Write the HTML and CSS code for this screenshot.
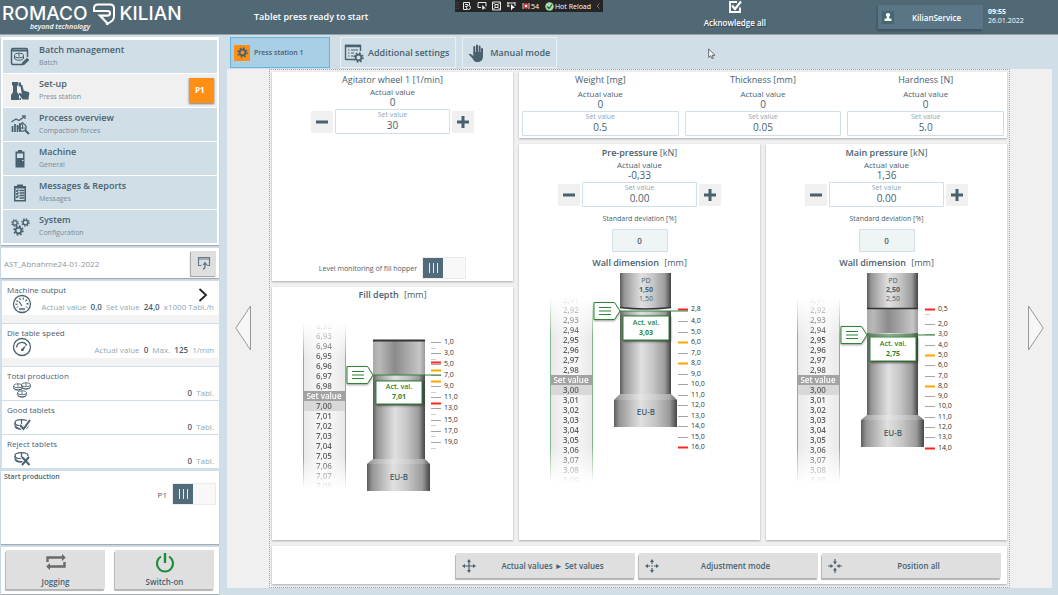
FILE: index.html
```
<!DOCTYPE html>
<html lang="en">
<head>
    <meta charset="UTF-8" />
    <meta name="viewport" content="width=device-width, initial-scale=1.0"/>
    <title>Romaco Kilian - Press station</title>
    <link rel="stylesheet" href="styles.css">
</head>
<body>
    <!-- shared icons and gradients -->
    <svg class="defs" width="0" height="0" aria-hidden="true">
        <defs>
            <linearGradient id="metal">
                <stop offset="0" stop-color="#5c5c5c"/>
                <stop offset="0.08" stop-color="#949494"/>
                <stop offset="0.25" stop-color="#bdbdbd"/>
                <stop offset="0.42" stop-color="#e0e0e0"/>
                <stop offset="0.65" stop-color="#c6c6c6"/>
                <stop offset="0.88" stop-color="#9b9b9b"/>
                <stop offset="1" stop-color="#454545"/>
            </linearGradient>
            <linearGradient id="die">
                <stop offset="0" stop-color="#a9a9a9"/>
                <stop offset="0.12" stop-color="#b9b9b9"/>
                <stop offset="0.42" stop-color="#8b8b8b"/>
                <stop offset="0.9" stop-color="#c6c6c6"/>
                <stop offset="1" stop-color="#9a9a9a"/>
            </linearGradient>
            <symbol id="gear" viewBox="0 0 20 20">
                <circle cx="10" cy="10" r="5.2" fill="none" stroke="currentColor" stroke-width="3"/>
                <circle cx="10" cy="10" r="8" fill="none" stroke="currentColor" stroke-width="3" stroke-dasharray="3.2 3.08"/>
            </symbol>
            <symbol id="minus" viewBox="0 0 12 12"><path d="M0 4.5h12v3H0z" fill="currentColor"/></symbol>
            <symbol id="plus" viewBox="0 0 12 12"><path d="M4.5 0h3v4.5H12v3H7.5V12h-3V7.5H0v-3h4.5z" fill="currentColor"/></symbol>
            <symbol id="tablet" viewBox="0 0 12 9">
                <ellipse cx="6" cy="3" rx="5.3" ry="2.4" fill="#fff" stroke="currentColor"/>
                <path d="M.7 3v2.6c0 3.6 10.6 3.6 10.6 0V3M6 .8v4" fill="none" stroke="currentColor"/>
                <path d="M1.5 5.5C3 8 9 8 10.500 5.500V7C8 9 4 9 1.500 7z" fill="currentColor"/>
            </symbol>
        </defs>
    </svg>

    <header class="header">
        <div class="logo">
            <div class="logo-name">
                <span>ROMACO</span>
                <svg class="logo-mark" viewBox="0 0 24 23">
                    <path d="M2 7.500V5.500Q2 1.500 6 1.500H18Q22 1.500 22 5.500V13Q22 17 18.500 19L14 21.500" fill="none" stroke="#fff" stroke-width="2"/>
                    <path d="M1 8H15.500Q18 8 18 10.300T15.500 12.600H8L16.500 21.500" fill="none" stroke="#fff" stroke-width="2.200"/>
                </svg>
                <span>KILIAN</span>
            </div>
            <div class="slogan">beyond technology</div>
        </div>
        <div class="status">Tablet press ready to start</div>
        <button class="acknowledge" type="button">
            <svg width="14" height="14" viewBox="0 0 14 14" fill="none" stroke="#fff">
                <path d="M9 2H2v10h10V7.500" stroke-width="1.800"/>
                <path d="M4 5.500L7 9L13 1.500" stroke-width="2.200"/>
            </svg>
            Acknowledge all
        </button>
        <button class="user" type="button">
            <span class="user-icon">
                <svg width="8" height="8" viewBox="0 0 8 8"><path d="M4 0a2 2 0 0 1 1.300 3.600L5 5l2.500 1v2h-7V6L3 5l-.3-1.400A2 2 0 0 1 4 0z" fill="#fff"/></svg>
            </span>
            <span class="user-name">KilianService</span>
        </button>
        <div class="clock"><b>09:55</b><span>26.01.2022</span></div>

        <div class="devbar">
            <svg width="66" height="10" viewBox="0 0 66 10" fill="none" stroke="#e8e8e8">
                <path d="M1 1v8M3 1v8" stroke="#555" stroke-dasharray="1 1"/>
                <path d="M12 8.500H8.500V1.500h6V4M10 3.500h3M10 5.500h2"/><circle cx="13.500" cy="6.500" r="2"/>
                <path d="M26 6.500h-3v-5h8v4"/><path d="M27 4l4 3.500h-2L27.500 9z" fill="#fff" stroke="none"/>
                <path d="M37.500 1h8v8h-8z"/><path d="M40 3.500h3v3h-3zM38 1.500l2 2M45 1.500l-2 2M38 8.500l2-2M45 8.500l-2-2"/>
                <path d="M52 2h8M52 5h3M53 1v5M60 1v4"/><path d="M56 3l4 4h-2l-2 2.500z" fill="#fff" stroke="none"/>
            </svg>
            <svg width="8" height="8" viewBox="0 0 8 8"><path d="M1 1v6M7 1v6" stroke="#ddd"/><circle cx="4" cy="4" r="2.700" fill="#e0433a"/><path d="M3 3l2 2M5 3L3 5" stroke="#fff"/></svg>
            <span>54</span>
            <svg class="hot" width="9" height="9" viewBox="0 0 9 9"><circle cx="4.500" cy="4.500" r="4.200" fill="#a9dcae"/><path d="M2.300 4.500L4 6.500L7 2.500" stroke="#1c5d25" stroke-width="1.200" fill="none"/></svg>
            <span>Hot Reload</span>
            <svg class="collapse" width="4" height="6" viewBox="0 0 4 6"><path d="M3.500.5L1 3l2.500 2.500" stroke="#777" fill="none"/></svg>
        </div>
    </header>

    <div class="page">
        <aside class="sidebar">
            <nav class="panel menu">
                <a href="#" class="menu-item">
                    <svg viewBox="0 0 20 20" fill="none" stroke="currentColor">
                        <path d="M12 17.500H3Q1.500 17.500 1.500 16V3Q1.500 1.500 3 1.500H16Q17.500 1.500 17.500 3V10" stroke-width="1.500"/><path d="M1.500 3.500h16" stroke-width="2"/>
                        <ellipse cx="9" cy="8.500" rx="4.500" ry="2.300"/><path d="M4.500 8.500V11c0 3 9 3 9 0V8.500M9 6.500v3"/>
                        <path d="M11.500 18.500l.7-3 4.800-4.800 2.300 2.300-4.800 4.800z" fill="currentColor" stroke="none"/>
                    </svg>
                    <span class="menu-text"><b>Batch management</b><small>Batch</small></span>
                </a>
                <a href="#" class="menu-item active">
                    <svg viewBox="0 0 20 20" fill="currentColor">
                        <path d="M2 1h6v3l-1 1v6l2 3v5H1v-5l2-3V5L2 4zM8.500 1.500h2.500V4h1.500v1.500h-4z"/>
                        <path d="M10.500 5l1.800-.3 1.600 5 4 1q1.600.5 1.500 2l-.7 3.300v2.500h-6l-4.200-5.500 1.300-1.200 2 1.200z"/>
                        <path d="M9.500 17H11v2H9.500z"/>
                    </svg>
                    <span class="menu-text"><b>Set-up</b><small>Press station</small></span>
                    <span class="menu-badge">P1</span>
                </a>
                <a href="#" class="menu-item">
                    <svg viewBox="0 0 20 20" fill="none" stroke="currentColor">
                        <path d="M1.500 7L6 4l3 1.500L14 2" stroke-width="1.300"/><path d="M12 1h3v3" stroke-width="1.300"/>
                        <path d="M2.500 17V11M5 17V9M7.500 17v-7M10 17V8M12.500 9V7" stroke-width="1.700"/>
                        <circle cx="12.500" cy="12.500" r="3.600" stroke-width="1.400"/><path d="M15 15l4 4" stroke-width="2"/><path d="M11 14v-2M12.500 14v-4M14 14v-2"/>
                    </svg>
                    <span class="menu-text"><b>Process overview</b><small>Compaction forces</small></span>
                </a>
                <a href="#" class="menu-item">
                    <svg viewBox="0 0 20 20">
                        <path d="M8 1h4v1.500H8zM5.500 2.500h9V18.500h-9z" fill="currentColor"/><path d="M7 4.500h6V9H7z" fill="#d0dee7"/><path d="M12 11.500h1.500" stroke="#d0dee7"/>
                    </svg>
                    <span class="menu-text"><b>Machine</b><small>General</small></span>
                </a>
                <a href="#" class="menu-item">
                    <svg viewBox="0 0 20 20">
                        <path d="M4 3h3V1.500h6V3h3v15.500H4z" fill="currentColor"/><path d="M5.500 5.500h9V17h-9z" fill="#d0dee7"/>
                        <path d="M6 7.500l1 1 1.500-2M6 10.500l1 1 1.500-2M6 13.500l1 1 1.500-2M9.500 7.500h5M9.500 10h5M9.500 12.500h5M9.500 15h5" stroke="currentColor" stroke-width="1.300" fill="none"/>
                    </svg>
                    <span class="menu-text"><b>Messages &amp; Reports</b><small>Messages</small></span>
                </a>
                <a href="#" class="menu-item">
                    <svg viewBox="0 0 20 20"><use href="#gear" x="1" y="2" width="8" height="8"/><use href="#gear" x="11" y="1" width="9" height="9"/><use href="#gear" x="3" y="8" width="11" height="11"/></svg>
                    <span class="menu-text"><b>System</b><small>Configuration</small></span>
                </a>
            </nav>

            <div class="panel project">
                <span>AST_Abnahme24-01-2022</span>
                <button type="button" class="project-open" aria-label="Open product">
                    <svg width="14" height="14" viewBox="0 0 14 14" fill="none" stroke="#5f7a8b"><path d="M4.500 9.500h-3v-8h11v8H10" stroke-width="1.200"/><path d="M1 3h12"/><path d="M6 13Q8.500 12.500 8 8" stroke-width="1.400"/><path d="M5.500 9L8 5.500l2.500 3.500z" fill="#5f7a8b" stroke="none"/></svg>
                </button>
            </div>

            <section class="stats">
                <div class="stat stat-tall">
                    <h3>Machine output</h3>
                    <div class="stat-row">
                        <svg width="20" height="20" viewBox="0 0 20 20" fill="none" stroke="currentColor"><circle cx="10" cy="10" r="8.500" stroke-width="1.300"/><circle cx="10" cy="10" r="5.500" stroke-width="2" stroke-dasharray="1.200 2.100" stroke-dashoffset="17"/><path d="M5 13.500h10v3H5z" fill="#fff" stroke="none"/><path d="M7 15h6" stroke-width="1.500"/><path d="M10 12L7 7.500" stroke-width="1.200"/></svg>
                        <p>Actual value <b>0,0</b> Set value <b>24,0</b> x1000 Tabl./h</p>
                    </div>
                    <svg class="stat-more" width="10" height="14" viewBox="0 0 10 14"><path d="M1.500 1L8 7L1.500 13" fill="none" stroke="#222" stroke-width="1.800"/></svg>
                </div>
                <div class="stat stat-tall">
                    <h3>Die table speed</h3>
                    <div class="stat-row">
                        <svg width="20" height="20" viewBox="0 0 20 20" fill="none" stroke="currentColor"><circle cx="10" cy="10" r="8.500" stroke-width="1.300"/><path d="M4.500 10.500C5 5 12 3.500 15 8.500" stroke-width="1.300"/><path d="M9 12.500l5-4.500-2.500 5.500c-1 1.500-3 .5-2.500-1z" fill="currentColor" stroke="none"/></svg>
                        <p>Actual value <b>0</b> Max. <b>125</b> 1/min</p>
                    </div>
                </div>
                <div class="stat">
                    <h3>Total production</h3>
                    <div class="stat-row">
                        <svg width="20" height="17" viewBox="0 0 20 17"><use href="#tablet" x="1" y="1" width="10" height="8"/><use href="#tablet" x="9" y="0" width="10" height="8"/><use href="#tablet" x="5" y="8" width="10" height="8"/></svg>
                        <p><b>0</b> Tabl.</p>
                    </div>
                </div>
                <div class="stat">
                    <h3>Good tablets</h3>
                    <div class="stat-row">
                        <svg width="20" height="17" viewBox="0 0 20 17"><use href="#tablet" x="2" y="3" width="15" height="11"/><path d="M8 9l3.500 4L18 4" fill="none" stroke="#fff" stroke-width="4"/><path d="M8 9l3.500 4L18 4" fill="none" stroke="currentColor" stroke-width="2"/></svg>
                        <p><b>0</b> Tabl.</p>
                    </div>
                </div>
                <div class="stat">
                    <h3>Reject tablets</h3>
                    <div class="stat-row">
                        <svg width="20" height="17" viewBox="0 0 20 17"><use href="#tablet" x="2" y="2" width="15" height="11"/><path d="M10 7l7 8M17 7l-7 8" stroke="#fff" stroke-width="4"/><path d="M10 7l7.500 8M17 7l-7 8" stroke="currentColor" stroke-width="2"/></svg>
                        <p><b>0</b> Tabl.</p>
                    </div>
                </div>
            </section>

            <section class="panel production">
                <h3>Start production</h3>
                <div class="switch-row">
                    <label for="prod-p1">P1</label>
                    <input type="checkbox" class="switch" id="prod-p1">
                </div>
            </section>

            <div class="panel run-buttons">
                <button type="button" class="grey-button">
                    <svg width="20" height="18" viewBox="0 0 20 16" fill="none" stroke="#6a6a6a" stroke-width="2.400"><path d="M1.500 8V3.500H17M18.500 8v4.500H3"/><path d="M16 0l3.800 3.500L16 7zM4 9l-3.800 3.500L4 16z" fill="#6a6a6a" stroke="none"/></svg>
                    Jogging
                </button>
                <button type="button" class="grey-button">
                    <svg width="20" height="20" viewBox="0 0 20 20" fill="none" stroke="#1d8c3c"><path d="M6 3.500a8 8 0 1 0 8 0" stroke-width="2"/><path d="M10 0v10" stroke-width="2.400"/></svg>
                    Switch-on
                </button>
            </div>
        </aside>

        <main class="main">
            <div class="tabs">
                <button type="button" class="tab active"><span class="tab-gear"><svg width="11" height="11"><use href="#gear"/></svg></span>Press station 1</button>
                <button type="button" class="tab">
                    <svg width="20" height="20" viewBox="0 0 20 20" fill="none" stroke="currentColor"><path d="M10 16.500H2Q1.500 16.500 1.500 16V2.500H16.500V8" stroke-width="1.400"/><path d="M1 3h16" stroke-width="2.500"/><path d="M4 7h1.500M7 7h7M4 10h1.500M7 10h3M4 13h1.500M7 13h2"/><use href="#gear" x="9" y="9" width="11" height="11"/></svg>
                    Additional settings
                </button>
                <button type="button" class="tab">
                    <svg width="20" height="20" viewBox="0 0 20 20" fill="none" stroke="currentColor" stroke-linecap="round"><path d="M8.300 10V4M11 10V2.500M13.600 10V3.500M16 11V6" stroke-width="2"/><path d="M7.300 9h9.700v5q-.5 4.500-4.500 5H10q-2-.5-3.500-3.500L2.500 11q1.500-1.300 4.800 2z" fill="currentColor" stroke="none"/></svg>
                    Manual mode
                </button>
            </div>

            <div class="stage">
                <button type="button" class="page-arrow" aria-label="Previous"><svg width="16" height="46" viewBox="0 0 16 46"><path d="M15.500 1v44L.8 23z" fill="#f6f6f6" stroke="#999"/></svg></button>

                <div class="station">
                    <div class="columns">
                        <div class="column column-feed">
                            <section class="card agitator">
                                <h2>Agitator wheel 1 <i>[1/min]</i></h2>
                                <div class="actual">Actual value<output>0</output></div>
                                <div class="stepper">
                                    <button type="button" aria-label="Decrease"><svg width="12" height="12"><use href="#minus"/></svg></button>
                                    <label class="field">Set value<input type="text" value="30"></label>
                                    <button type="button" aria-label="Increase"><svg width="12" height="12"><use href="#plus"/></svg></button>
                                </div>
                                <div class="switch-row">
                                    <label for="hopper">Level monitoring of fill hopper</label>
                                    <input type="checkbox" class="switch" id="hopper">
                                </div>
                            </section>

                            <section class="card fill-depth">
                                <h2 class="strong">Fill depth <i>[mm]</i></h2>
                                <div class="gauge">
                                    <ol class="wheel" data-from="692" data-to="708" data-set="699"></ol>
                                    <svg class="punch" width="137" height="170" viewBox="0 0 137 170">
                                        <path d="M27 19h52v35H27z" fill="url(#die)"/><path d="M27 19.500h52" stroke="#333" stroke-width="2"/>
                                        <path d="M27 54h52v84H27z" fill="url(#metal)"/>
                                        <path d="M27 138h52l5 5v27H21v-27z" fill="url(#metal)"/><path d="M27 138h52l5 5H21z" fill="#fff" opacity="0.150"/>
                                        <text class="punch-name" x="53" y="159">EU-B</text>
                                        <g class="scale" data-kind="fill"></g>
                                        <g class="pointer" transform="translate(0 54)">
                                            <path class="pointer-line" d="M26 0h69"/>
                                            <path class="pointer-tag" d="M1 -8.500H21.500L27 0L21.500 8.500H1z"/>
                                            <path class="pointer-bars" d="M6 -3.500h12M6 0h12M6 3.500h12"/>
                                        </g>
                                        <rect class="value-box" x="30" y="60" width="46" height="23"/>
                                        <text class="value-label" x="53" y="68">Act. val.</text>
                                        <text class="value-number" x="53" y="78">7,01</text>
                                    </svg>
                                </div>
                            </section>
                        </div>

                        <div class="column column-press">
                            <section class="card tablet-values">
                                <div class="quantity">
                                    <h2>Weight <i>[mg]</i></h2>
                                    <div class="actual">Actual value<output>0</output></div>
                                    <label class="field">Set value<input type="text" value="0,5"></label>
                                </div>
                                <div class="quantity">
                                    <h2>Thickness <i>[mm]</i></h2>
                                    <div class="actual">Actual value<output>0</output></div>
                                    <label class="field">Set value<input type="text" value="0,05"></label>
                                </div>
                                <div class="quantity">
                                    <h2>Hardness <i>[N]</i></h2>
                                    <div class="actual">Actual value<output>0</output></div>
                                    <label class="field">Set value<input type="text" value="5,0"></label>
                                </div>
                            </section>

                            <div class="pressures">
                                <section class="card">
                                    <h2 class="large">Pre-pressure <i>[kN]</i></h2>
                                    <div class="actual">Actual value<output>-0,33</output></div>
                                    <div class="stepper">
                                        <button type="button" aria-label="Decrease"><svg width="12" height="12"><use href="#minus"/></svg></button>
                                        <label class="field">Set value<input type="text" value="0,00"></label>
                                        <button type="button" aria-label="Increase"><svg width="12" height="12"><use href="#plus"/></svg></button>
                                    </div>
                                    <div class="deviation">Standard deviation [%]<output>0</output></div>
                                    <h2 class="strong">Wall dimension <i>[mm]</i></h2>
                                    <div class="gauge">
                                        <ol class="wheel" data-from="291" data-to="309" data-set="299"></ol>
                                        <svg class="punch" width="137" height="212" viewBox="0 0 137 212">
                                            <path d="M27 0h51v34q-25 3-51 0z" fill="url(#metal)"/><path d="M27 34.500q25 3 51 0" stroke="#333" stroke-width="1.500" fill="none"/>
                                            <text class="punch-text" x="53" y="10">PD</text>
                                            <text class="punch-text bold" x="53" y="19">1,50</text>
                                            <text class="punch-text" x="53" y="28">1,50</text>
                                            <path d="M27 38h51v83H27z" fill="url(#metal)"/>
                                            <path d="M27 121h51l6 6v27H21v-27z" fill="url(#metal)"/><path d="M27 121h51l6 6H21z" fill="#fff" opacity="0.150"/>
                                            <text class="punch-name" x="53" y="142">EU-B</text>
                                            <g class="scale" data-kind="pre"></g>
                                            <g class="pointer" transform="translate(0 38)">
                                                <path class="pointer-line" d="M26 0h69"/>
                                                <path class="pointer-tag" d="M1 -8.500H21.500L27 0L21.500 8.500H1z"/>
                                                <path class="pointer-bars" d="M6 -3.500h12M6 0h12M6 3.500h12"/>
                                            </g>
                                            <rect class="value-box" x="30" y="43" width="46" height="24"/>
                                            <text class="value-label" x="53" y="52">Act. val.</text>
                                            <text class="value-number" x="53" y="62">3,03</text>
                                        </svg>
                                    </div>
                                </section>

                                <section class="card">
                                    <h2 class="large">Main pressure <i>[kN]</i></h2>
                                    <div class="actual">Actual value<output>1,36</output></div>
                                    <div class="stepper">
                                        <button type="button" aria-label="Decrease"><svg width="12" height="12"><use href="#minus"/></svg></button>
                                        <label class="field">Set value<input type="text" value="0,00"></label>
                                        <button type="button" aria-label="Increase"><svg width="12" height="12"><use href="#plus"/></svg></button>
                                    </div>
                                    <div class="deviation">Standard deviation [%]<output>0</output></div>
                                    <h2 class="strong">Wall dimension <i>[mm]</i></h2>
                                    <div class="gauge">
                                        <ol class="wheel" data-from="291" data-to="309" data-set="299"></ol>
                                        <svg class="punch" width="137" height="212" viewBox="0 0 137 212">
                                            <path d="M27 36h51v24H27z" fill="url(#die)"/>
                                            <path d="M27 0h51v35H27z" fill="url(#metal)"/><path d="M27 35.500h51" stroke="#333" stroke-width="1.500"/>
                                            <text class="punch-text" x="53" y="10">PD</text>
                                            <text class="punch-text bold" x="53" y="19">2,50</text>
                                            <text class="punch-text" x="53" y="28">2,50</text>
                                            <path d="M27 60h51v82H27z" fill="url(#metal)"/>
                                            <path d="M27 142h51l6 5v27H21v-27z" fill="url(#metal)"/><path d="M27 142h51l6 5H21z" fill="#fff" opacity="0.150"/>
                                            <text class="punch-name" x="53" y="163">EU-B</text>
                                            <g class="scale" data-kind="main"></g>
                                            <g class="pointer" transform="translate(0 62)">
                                                <path class="pointer-line" d="M26 0h69"/>
                                                <path class="pointer-tag" d="M1 -8.500H21.500L27 0L21.500 8.500H1z"/>
                                                <path class="pointer-bars" d="M6 -3.500h12M6 0h12M6 3.500h12"/>
                                            </g>
                                            <rect class="value-box" x="30" y="64" width="46" height="24"/>
                                            <text class="value-label" x="53" y="73">Act. val.</text>
                                            <text class="value-number" x="53" y="83">2,75</text>
                                        </svg>
                                    </div>
                                </section>
                            </div>
                        </div>
                    </div>

                    <div class="card actions">
                        <button type="button" class="grey-button">
                            <svg width="14" height="14" viewBox="0 0 14 14"><path d="M7 2v10M2 7h10" stroke="currentColor" stroke-width="1.200"/><path d="M7 0l2 3H5zM7 14l2-3H5zM0 7l3-2v4zM14 7l-3-2v4z" fill="currentColor"/></svg>
                            <span>Actual values ► Set values</span>
                        </button>
                        <button type="button" class="grey-button">
                            <svg width="14" height="14" viewBox="0 0 14 14"><path d="M7 2v3M7 9v3M2 7h3M9 7h3" stroke="currentColor" stroke-width="1.200"/><path d="M7 0l2 3H5zM7 14l2-3H5zM0 7l3-2v4zM14 7l-3-2v4z" fill="currentColor"/><circle cx="7" cy="7" r="0.800" fill="currentColor"/></svg>
                            <span>Adjustment mode</span>
                        </button>
                        <button type="button" class="grey-button">
                            <svg width="14" height="14" viewBox="0 0 14 14"><path d="M7 0v3M7 11v3M0 7h3M11 7h3" stroke="currentColor" stroke-width="1.200"/><path d="M7 5.500l2-3H5zM7 8.500l2 3H5zM5.500 7l-3-2v4zM8.500 7l3-2v4z" fill="currentColor"/></svg>
                            <span>Position all</span>
                        </button>
                    </div>
                </div>

                <button type="button" class="page-arrow" aria-label="Next"><svg width="16" height="46" viewBox="0 0 16 46"><path d="M.5 1v44L15.200 23z" fill="#f6f6f6" stroke="#999"/></svg></button>
            </div>
        </main>
    </div>

    <svg class="cursor" width="8" height="12" viewBox="0 0 8 12"><path d="M.7 1v8.500l2-1.800 1.300 3 1.300-.6-1.200-2.800H7z" fill="#fff" stroke="#444" stroke-width="0.800"/></svg>

    <script src="script.js"></script>
</body>
</html>
```
FILE: styles.css
```
* {
    box-sizing: border-box;
}
body {
    margin: 0;
    min-height: 100vh;
    display: flex;
    flex-direction: column;
    background-color: #d0dee7;
    font-family: "Open Sans", "Noto Sans", sans-serif;
    font-size: 8px;
    color: #48616f;
}
h2, h3, p, ol {
    margin: 0;
    padding: 0;
    font-weight: 500;
}
button, input {
    font: inherit;
    color: inherit;
    border: none;
    padding: 0;
}
button {
    cursor: pointer;
}
a {
    color: inherit;
    text-decoration: none;
}
.defs {
    position: absolute;
}

/* header */
.header {
    position: relative;
    display: flex;
    height: 35px;
    background-color: #516875;
    border-bottom: 1px solid #999fa4;
    color: #fff;
}
.logo {
    width: 254px;
    padding: 6px 0 0 2px;
}
.logo-name {
    display: flex;
    align-items: center;
    gap: 4px;
    height: 16px;
    font-family: Inter, sans-serif;
    font-size: 19px;
    font-weight: 500;
    line-height: 16px;
}
.logo-mark {
    width: 24px;
    height: 23px;
}
.slogan {
    padding-left: 28px;
    font-size: 7px;
    font-style: italic;
    font-weight: 600;
    line-height: 10px;
}
.status {
    flex: 1;
    font-size: 9px;
    font-weight: 600;
    line-height: 33px;
}
.acknowledge {
    display: flex;
    flex-direction: column;
    align-items: center;
    gap: 3px;
    margin-right: 112px;
    background: none;
    font-weight: 600;
    line-height: 11px;
    text-shadow: 1px 1px 1px #33444f;
}
.user {
    display: flex;
    align-items: center;
    width: 105px;
    height: 24px;
    margin: 5px 5px 0 0;
    padding: 0 4px;
    background-color: #5a7586;
    box-shadow: -1px 2px 2px #3f535f;
    font-weight: 600;
}
.user-icon {
    width: 12px;
    height: 13px;
    display: flex;
    align-items: center;
    justify-content: center;
    background-color: #456870;
}
.user-name {
    flex: 1;
}
.clock {
    display: flex;
    flex-direction: column;
    width: 70px;
    padding-top: 7px;
    font-size: 7px;
    line-height: 9px;
}
.devbar {
    position: absolute;
    top: 0;
    left: 43%;
    display: flex;
    align-items: center;
    gap: 1px;
    width: 148px;
    height: 12px;
    background-color: #252526;
    font-size: 7px;
}
.devbar .hot {
    margin-left: 5px;
}
.devbar .collapse {
    margin-left: auto;
    margin-right: 3px;
}

/* page */
.page {
    flex: 1;
    display: grid;
    grid-template-columns: 218px 1fr;
    gap: 8px;
    padding: 2px 6px 1px 1px;
}
.panel {
    background-color: #fff;
    box-shadow: 0 1px 1px #9fadb6;
}

/* sidebar */
.sidebar {
    display: flex;
    flex-direction: column;
    gap: 3px;
}
.menu {
    display: grid;
    grid-auto-rows: 33px;
    gap: 1px;
    padding: 3px 2px 2px;
}
.menu-item {
    display: flex;
    align-items: center;
    gap: 9px;
    padding: 0 3px 0 7px;
    background-color: #d0dee7;
}
.menu-item.active {
    background-color: #f0f0f0;
}
.menu-item > svg {
    width: 20px;
    height: 20px;
}
.menu-text {
    flex: 1;
}
.menu-text b {
    display: block;
    font-size: 9px;
    font-weight: 600;
    line-height: 12px;
}
.menu-text small {
    font-size: 7px;
    line-height: 12px;
    color: #758b99;
}
.menu-badge {
    width: 25px;
    height: 25px;
    background-color: #ff9015;
    box-shadow: 0 1px 2px #777;
    color: #fff;
    font-weight: 700;
    line-height: 24px;
    padding-left: 6px;
}
.project {
    display: flex;
    align-items: center;
    justify-content: space-between;
    height: 30px;
    padding: 0 3px;
    color: #8d979d;
}
.project-open {
    width: 25px;
    height: 25px;
    display: flex;
    align-items: center;
    justify-content: center;
    background-color: #dfdfdf;
    box-shadow: -1px 1px 1px #aaa;
}
.stats {
    display: flex;
    flex-direction: column;
    gap: 1px;
    padding-left: 1px;
}
.stat {
    position: relative;
    height: 33px;
    padding: 3px 5px 0;
    background-color: #fff;
}
.stat-tall {
    height: 42px;
    border-bottom: 8px solid #f3f3f3;
}
.stat h3 {
    font-size: 8px;
    line-height: 12px;
}
.stat-row {
    display: flex;
    align-items: center;
    justify-content: space-between;
    padding-left: 5px;
}
.stat-tall .stat-row {
    margin-top: -2px;
}
.stat-row p {
    font-weight: 400;
    line-height: 12px;
    padding-top: 5px;
    color: #8fa7b5;
}
.stat-row b {
    margin: 0 2px;
    font-weight: 600;
    color: #48616f;
}
.stat-more {
    position: absolute;
    top: 7px;
    right: 11px;
}
.production {
    flex: 1;
    padding: 0 3px;
}
.production h3 {
    font-size: 7px;
    font-weight: 600;
    line-height: 12px;
}
.production .switch-row {
    justify-content: flex-end;
}
.run-buttons {
    display: grid;
    grid-template-columns: 1fr 1fr;
    gap: 10px;
    padding: 3px 5px 5px;
}
.grey-button {
    display: flex;
    align-items: center;
    background-color: #dfdfdf;
    box-shadow: -1px 2px 1px #b4b4b4;
    font-weight: 600;
    border-radius: 1px;
}
.run-buttons .grey-button {
    flex-direction: column;
    justify-content: space-between;
    height: 39px;
    padding: 3px 0 2px;
    line-height: 11px;
}

/* switches */
.switch-row {
    display: flex;
    align-items: center;
    justify-content: center;
    gap: 5px;
}
.switch {
    appearance: none;
    position: relative;
    width: 44px;
    height: 22px;
    margin: 0;
    border: 1px solid #ebebeb;
    background: linear-gradient(90deg, #516b7a 21px, #f8f8f8 21px) border-box;
}
.switch::before {
    content: "";
    position: absolute;
    left: 6px;
    top: 5px;
    width: 9px;
    height: 10px;
    background: repeating-linear-gradient(90deg, #e4eaee 0 1px, transparent 1px 4px);
}

/* tabs */
.main {
    display: flex;
    flex-direction: column;
    padding-bottom: 6px;
}
.tabs {
    display: flex;
    gap: 6px;
    height: 32px;
    padding: 0 3px 1px;
}
.tab {
    display: flex;
    align-items: center;
    gap: 4px;
    padding: 0 6px 0 3px;
    background-color: #d0dee7;
    border: 1px solid #e6f0f5;
    font-size: 9px;
    font-weight: 600;
}
.tab.active {
    width: 100px;
    margin-right: 4px;
    background-color: #a8cfe5;
    border: 1px solid #66b5e0;
    font-size: 7px;
}
.tab-gear {
    display: flex;
    align-items: center;
    justify-content: center;
    width: 16px;
    height: 16px;
    background-color: #ff9015;
}

/* stage */
.stage {
    flex: 1;
    display: flex;
    background-color: #f0f0f0;
}
.page-arrow {
    width: 42px;
    padding: 0;
    background: none;
}
.page-arrow:first-child {
    padding-right: 10px;
}
.page-arrow:last-child {
    padding-left: 10px;
}
.station {
    flex: 1;
    display: flex;
    flex-direction: column;
    gap: 6px;
    padding: 2px 2px 3px;
    border: 1px dotted #a3a3a3;
}
.card {
    background-color: #fff;
    box-shadow: 0 1px 2px #aaa;
    text-align: center;
}
.columns {
    flex: 1;
    display: grid;
    grid-template-columns: repeat(3, 1fr);
    gap: 6px;
}
.column {
    display: grid;
    gap: 6px;
}
.column-feed {
    grid-template-rows: 209fr 253fr;
}
.column-press {
    grid-column: span 2;
    grid-template-rows: auto 1fr;
}
.pressures {
    display: grid;
    grid-template-columns: 1fr 1fr;
    gap: 6px;
}
.card h2 {
    font-size: 9px;
    line-height: 16px;
}
.card h2 i {
    font-style: normal;
    font-weight: 400;
}
.card h2.large {
    font-weight: 600;
    line-height: 17px;
}
.card h2.strong {
    font-weight: 600;
}
.card h2.strong i {
    margin-left: 3px;
}
.actual {
    line-height: 7px;
}
.actual output {
    display: block;
    font-size: 10px;
    font-weight: 500;
    line-height: 14px;
}
.field {
    display: block;
    height: 25px;
    border: 1px solid #d0dee7;
    border-radius: 1px;
    font-size: 7px;
    line-height: 10px;
    color: #8fa7b5;
}
.field input {
    display: block;
    width: 100%;
    height: 9px;
    background: none;
    text-align: center;
    font-size: 10px;
    font-weight: 500;
    line-height: 9px;
    color: #48616f;
}
.stepper {
    display: flex;
    align-items: center;
    justify-content: center;
    gap: 2px;
}
.stepper .field {
    width: 115px;
}
.stepper button {
    display: flex;
    align-items: center;
    justify-content: center;
    width: 22px;
    height: 22px;
    background-color: #f0f0f0;
}
.agitator {
    display: flex;
    flex-direction: column;
    padding-bottom: 2px;
}
.agitator .switch-row {
    margin-top: auto;
    font-size: 7px;
}
.tablet-values {
    display: grid;
    grid-template-columns: repeat(3, 1fr);
    gap: 6px;
    padding: 0 3px 2px;
}
.tablet-values .actual {
    padding-top: 2px;
}
.deviation {
    padding-top: 7px;
    font-size: 7px;
    line-height: 10px;
}
.deviation output {
    display: block;
    width: 56px;
    margin: 5px auto 3px;
    background-color: #eff4f4;
    border: 1px solid #d0dee7;
    border-radius: 1px;
    font-size: 8px;
    font-weight: 600;
    line-height: 21px;
}

/* gauges */
.gauge {
    display: flex;
    align-items: flex-end;
    justify-content: center;
    padding-top: 2px;
}
.fill-depth .gauge {
    padding-top: 18px;
}
.wheel {
    width: 43px;
    list-style: none;
    background: linear-gradient(90deg, #e9e9e9, #fafafa 50%, #e9e9e9);
    border-left: 1px solid #7fb785;
    border-right: 1px solid #7fb785;
    font-size: 8px;
    font-weight: 600;
    line-height: 10px;
    color: #5f5f5f;
    -webkit-mask-image: linear-gradient(transparent 1%, #000 22%, #000 80%, transparent 99%);
    mask-image: linear-gradient(transparent 1%, #000 22%, #000 80%, transparent 99%);
}
.wheel .set-label {
    background-color: #a3a3a3;
    color: #fff;
}
.wheel .selected {
    background-color: #d8d8d8;
}
.punch {
    display: block;
}
.punch text {
    font-size: 7px;
    fill: #48616f;
    text-anchor: middle;
}
.punch .punch-name {
    font-size: 8px;
    font-weight: 600;
}
.punch .bold {
    font-weight: 700;
}
.punch .value-label,
.punch .value-number {
    fill: #2c8434;
    font-weight: 600;
}
.punch .value-number {
    font-weight: 700;
}
.value-box {
    fill: #fff;
    stroke: #2c8434;
    filter: drop-shadow(1px 1px 1px #333);
}
.pointer-line {
    stroke: #2c8434;
}
.pointer-tag {
    fill: #fff;
    stroke: #2c8434;
    filter: drop-shadow(0 1px 1px #999);
}
.pointer-bars {
    stroke: #2c8434;
}
.punch .scale text {
    fill: #2f2f2f;
    text-anchor: start;
}
.scale .tick {
    stroke: #a5a5a5;
}
.scale .minor {
    stroke: #cfcfcf;
}
.scale .warn {
    stroke: #ffa500;
    stroke-width: 2;
}
.scale .limit {
    stroke: #f22;
    stroke-width: 2;
}

/* bottom actions */
.actions {
    display: flex;
    justify-content: flex-end;
    gap: 4px;
    padding: 7px 6px 6px;
}
.actions .grey-button {
    width: 179px;
    height: 25px;
    padding: 0 6px;
}
.actions span {
    flex: 1;
}
.cursor {
    position: absolute;
    left: 708px;
    top: 48px;
}
```
FILE: script.js
```
// [label, y, type] - rows without a label only get a short mark
const scales = {
    fill: [
        ['1,0', 21, 'tick'], ['', 27, 'minor'], ['3,0', 32, 'tick'], ['', 38, 'minor'],
        ['', 41, 'limit'], ['5,0', 43, 'tick'], ['', 49, 'warn'], ['7,0', 54, 'tick'],
        ['', 60, 'warn'], ['9,0', 65, 'tick'], ['', 71, 'minor'], ['11,0', 76, 'tick'],
        ['', 82, 'limit'], ['13,0', 87, 'tick'], ['', 93, 'minor'], ['15,0', 99, 'tick'],
        ['', 104, 'minor'], ['17,0', 110, 'tick'], ['', 115, 'minor'], ['19,0', 121, 'tick'],
        ['', 127, 'minor']
    ],
    pre: [['2,8', 36, 'limit']],
    main: [['0,5', 36, 'limit'], ['', 41, 'minor']]
};

for (let i = 4; i <= 16; i++) {
    const type = i === 16 ? 'limit' : (i === 6 || i === 8) ? 'warn' : 'tick';
    scales.pre.push([i + ',0', Math.round(48 + (i - 4) * 10.5), type]);
}
for (let i = 2; i <= 14; i++) {
    const type = i === 14 ? 'limit' : (i === 5 || i === 8) ? 'warn' : 'tick';
    scales.main.push([i + ',0', Math.round(51 + (i - 2) * 10.3), type]);
}

document.querySelectorAll('.scale').forEach(scale => {
    scale.innerHTML = scales[scale.dataset.kind].map(([label, y, type]) => {
        const end = type === 'minor' ? 90 : 95;
        const text = label ? `<text x="98" y="${y + 2}">${label}</text>` : '';
        return `<path class="${type}" d="M85 ${y + 0.5}H${end}"/>${text}`;
    }).join('');
});

document.querySelectorAll('.wheel').forEach(wheel => {
    const set = Number(wheel.dataset.set);
    for (let i = Number(wheel.dataset.from); i <= Number(wheel.dataset.to); i++) {
        const row = document.createElement('li');
        row.textContent = i === set ? 'Set value' : (i / 100).toFixed(2).replace('.', ',');
        if (i === set) row.className = 'set-label';
        if (i === set + 1) row.className = 'selected';
        wheel.appendChild(row);
    }
});
```
